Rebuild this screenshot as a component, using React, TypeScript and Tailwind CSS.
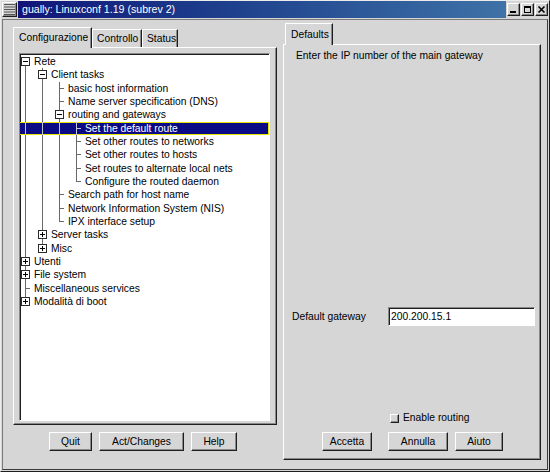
import React from 'react';

type Kind = 'leaf' | 'open' | 'closed';

interface TreeRow {
  label: string;
  level: number;
  kind: Kind;
  first?: boolean;
  last?: boolean;
  selected?: boolean;
}

const rows: TreeRow[] = [
  { label: 'Rete', level: 0, kind: 'open', first: true },
  { label: 'Client tasks', level: 1, kind: 'open' },
  { label: 'basic host information', level: 2, kind: 'leaf' },
  { label: 'Name server specification (DNS)', level: 2, kind: 'leaf' },
  { label: 'routing and gateways', level: 2, kind: 'open' },
  { label: 'Set the default route', level: 3, kind: 'leaf', selected: true },
  { label: 'Set other routes to networks', level: 3, kind: 'leaf' },
  { label: 'Set other routes to hosts', level: 3, kind: 'leaf' },
  { label: 'Set routes to alternate local nets', level: 3, kind: 'leaf' },
  { label: 'Configure the routed daemon', level: 3, kind: 'leaf', last: true },
  { label: 'Search path for host name', level: 2, kind: 'leaf' },
  { label: 'Network Information System (NIS)', level: 2, kind: 'leaf' },
  { label: 'IPX interface setup', level: 2, kind: 'leaf', last: true },
  { label: 'Server tasks', level: 1, kind: 'closed' },
  { label: 'Misc', level: 1, kind: 'closed', last: true },
  { label: 'Utenti', level: 0, kind: 'closed' },
  { label: 'File system', level: 0, kind: 'closed' },
  { label: 'Miscellaneous services', level: 0, kind: 'leaf' },
  { label: 'Modalità di boot', level: 0, kind: 'closed', last: true },
];

const raised =
  'border border-t-white border-l-white border-r-[#1e1e1e] border-b-[#1e1e1e] shadow-[inset_-1px_-1px_0_0_#8a8a8a]';
const sunken =
  'border border-t-[#8a8a8a] border-l-[#8a8a8a] border-r-white border-b-white shadow-[inset_1px_1px_0_0_#1e1e1e]';

const Expander: React.FC<{ open: boolean }> = ({ open }) => (
  <svg width="9" height="9" viewBox="0 0 9 9" className="absolute left-[1px] top-[2px]">
    <rect x="0.5" y="0.5" width="8" height="8" fill="white" stroke="#2a2a2a" />
    <line x1="2" y1="4.5" x2="7" y2="4.5" stroke="#000" />
    {!open && <line x1="4.5" y1="2" x2="4.5" y2="7" stroke="#000" />}
  </svg>
);

const TreeLine: React.FC<{ row: TreeRow }> = ({ row }) => {
  const line = row.selected ? 'bg-[#c4c4d4]' : 'bg-[#6a6a6a]';
  const vert = row.first
    ? 'top-1/2 bottom-0'
    : row.last
    ? 'top-0 h-1/2'
    : 'top-0 bottom-0';
  return (
    <div
      className={`-ml-px flex h-[13.33px] pl-px ${
        row.selected
          ? 'bg-[#0b0b86] text-white outline outline-1 -outline-offset-1 outline-[#e6e600]'
          : 'text-black'
      }`}
    >
      {Array.from({ length: row.level }).map((_, i) => (
        <div key={i} className="relative w-[17px] shrink-0">
          <div className={`absolute left-[5px] top-0 bottom-0 w-px ${line}`} />
        </div>
      ))}
      <div className="relative w-[14px] shrink-0">
        <div className={`absolute left-[5px] w-px ${vert} ${line}`} />
        {row.kind === 'leaf' ? (
          <div className={`absolute left-[5px] top-[6px] h-px w-[5px] ${line}`} />
        ) : (
          <Expander open={row.kind === 'open'} />
        )}
      </div>
      <span className="whitespace-nowrap leading-[13.33px]">{row.label}</span>
    </div>
  );
};

const Button: React.FC<{ label: string; w: string }> = ({ label, w }) => (
  <div className={`flex h-[19px] items-center justify-center bg-[#d6d6d6] ${raised} ${w}`}>
    {label}
  </div>
);

const ActiveTab: React.FC<{ label: string; w: string; h: string }> = ({ label, w, h }) => (
  <div
    className={`relative z-10 -mb-px flex items-center bg-[#d6d6d6] pl-[5px] border-l border-t border-r border-l-white border-t-white border-r-[#1e1e1e] shadow-[inset_-1px_0_0_0_#8a8a8a] ${w} ${h}`}
  >
    {label}
  </div>
);

const Tab: React.FC<{ label: string; w: string }> = ({ label, w }) => (
  <div
    className={`flex h-[18px] items-center pl-[4px] pt-[1px] border-l border-t border-r border-l-white border-t-white border-r-[#1e1e1e] shadow-[inset_-1px_0_0_0_#8a8a8a] ${w}`}
  >
    {label}
  </div>
);

const TitleButton: React.FC<{ children: React.ReactNode }> = ({ children }) => (
  <div className={`flex h-[13px] w-[13px] items-center justify-center bg-[#d6d6d6] ${raised}`}>
    {children}
  </div>
);

const App: React.FC = () => {
  return (
    <div className="flex h-[472px] w-[550px] flex-col overflow-hidden border border-t-[#ececec] border-l-[#ececec] border-r-[#1e1e1e] border-b-[#1e1e1e] bg-[#d6d6d6] px-px pb-px font-['Liberation_Sans',Arial,sans-serif] text-[10.3px] text-black">
      {/* Title bar */}
      <div className="flex h-[18px] shrink-0 items-start">
        <div className={`mt-px h-[15px] w-[15px] bg-[#d6d6d6] ${raised}`}>
          <svg width="13" height="13" viewBox="0 0 13 13">
            {[1.5, 4, 6.5, 9, 11.5].map(y => (
              <line key={y} x1="1" y1={y} x2="12" y2={y} stroke="#555" />
            ))}
          </svg>
        </div>
        <div className="ml-px h-[17px] flex-1 bg-linear-to-r from-[#121278] to-[#3f72a6] pl-[4px] text-[10.6px] leading-[17px] text-white">
          gually: Linuxconf 1.19 (subrev 2)
        </div>
        <div className="ml-px mt-[2px] flex gap-px">
          <TitleButton>
            <svg width="9" height="9" viewBox="0 0 9 9">
              <rect x="1" y="6" width="6" height="2" fill="#000" />
            </svg>
          </TitleButton>
          <TitleButton>
            <svg width="9" height="9" viewBox="0 0 9 9">
              <rect x="1.5" y="1.5" width="6" height="6" fill="none" stroke="#000" />
              <rect x="1" y="1" width="7" height="2" fill="#000" />
            </svg>
          </TitleButton>
          <TitleButton>
            <svg width="9" height="9" viewBox="0 0 9 9">
              <path d="M1.5 1.5 L7.5 7.5 M7.5 1.5 L1.5 7.5" stroke="#000" strokeWidth="1.6" />
            </svg>
          </TitleButton>
        </div>
      </div>

      {/* Client area */}
      <div className="flex flex-1 border border-t-[#7a7a7a] border-l-[#7a7a7a] border-r-[#3a3a3a] border-b-[#3a3a3a]">
        {/* Left pane */}
        <div className="flex w-[277px] shrink-0 flex-col pl-[10px] pr-[3px] pt-[7px]">
          <div className="flex h-[20px] items-end">
            <ActiveTab label="Configurazione" w="w-[79px]" h="h-[21px]" />
            <Tab label="Controllo" w="w-[50px]" />
            <Tab label="Status" w="w-[36px]" />
          </div>
          <div className={`h-[378px] pb-[3px] pl-[5px] pr-[6px] pt-[5px] ${raised}`}>
            <div className={`h-full overflow-hidden bg-white pt-[1px] ${sunken}`}>
              {rows.map(r => (
                <TreeLine key={r.label} row={r} />
              ))}
            </div>
          </div>
          <div className="ml-[36px] mt-[7px] flex gap-[7px]">
            <Button label="Quit" w="w-[43px]" />
            <Button label="Act/Changes" w="w-[85px]" />
            <Button label="Help" w="w-[46px]" />
          </div>
        </div>

        {/* Right pane */}
        <div className="flex flex-1 flex-col pl-[3px] pr-[6px] pt-[3px]">
          <div className="flex h-[21px] items-end pl-[2px]">
            <ActiveTab label="Defaults" w="w-[48px]" h="h-[22px]" />
          </div>
          <div className={`flex h-[416px] flex-col ${raised}`}>
            <div className="pl-[12px] pt-[4px] leading-[13px]">
              Enter the IP number of the main gateway
            </div>
            <div className="mt-[245px] flex h-[19px] items-center pl-[8px]">
              <span className="w-[96px]">Default gateway</span>
              <div className={`flex h-[19px] w-[147px] items-center bg-white pl-[2px] ${sunken}`}>
                200.200.15.1
              </div>
            </div>
            <div className="mt-[86px] flex h-[12px] items-center pl-[106px]">
              <div className={`h-[9px] w-[9px] bg-[#d6d6d6] ${raised}`} />
              <span className="ml-[4px]">Enable routing</span>
            </div>
            <div className="ml-[38px] mt-[8px] flex">
              <Button label="Accetta" w="w-[50px]" />
              <div className="ml-[16px]">
                <Button label="Annulla" w="w-[60px]" />
              </div>
              <div className="ml-[7px]">
                <Button label="Aiuto" w="w-[48px]" />
              </div>
            </div>
          </div>
        </div>
      </div>
    </div>
  );
};

export default App;
